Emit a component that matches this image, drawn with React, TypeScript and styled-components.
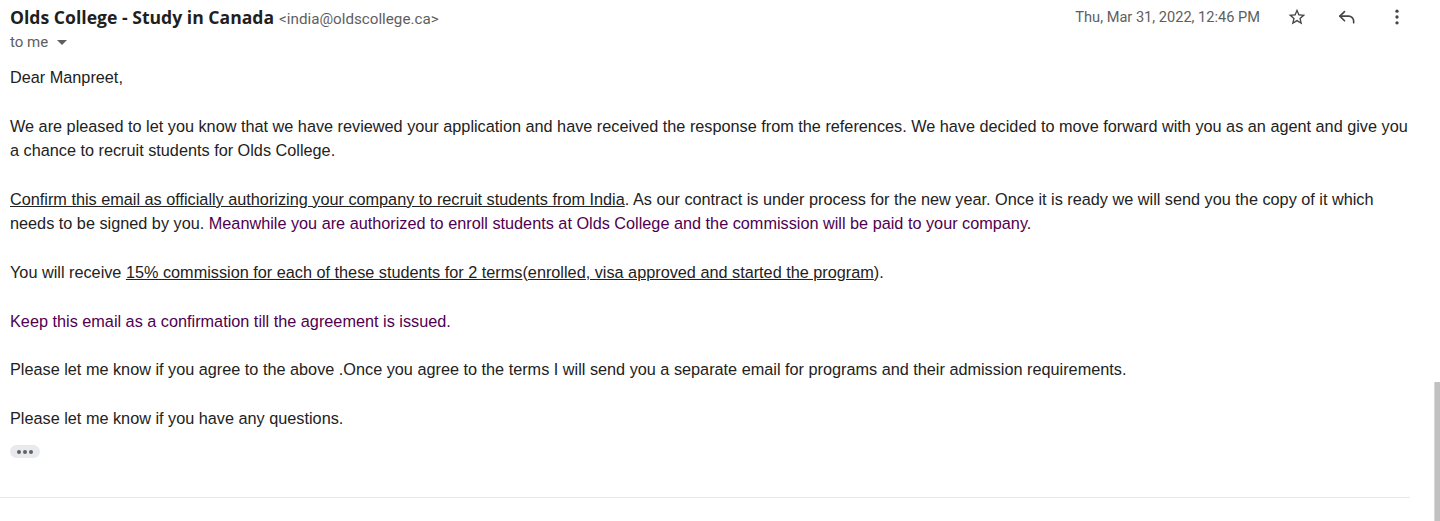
import styled, { createGlobalStyle } from 'styled-components';

const GlobalStyle = createGlobalStyle`
  html, body {
    margin: 0;
    padding: 0;
    background: #fff;
  }
  body {
    font-family: Arial, "Liberation Sans", sans-serif;
    overflow: hidden;
  }
`;

const StarIcon = () => (
  <svg width="20" height="20" viewBox="0 0 24 24" fill="#444746">
    <path d="M22 9.24l-7.19-.62L12 2 9.19 8.63 2 9.24l5.46 4.73L5.82 21 12 17.27 18.18 21l-1.63-7.03L22 9.24zM12 15.4l-3.76 2.27 1-4.28-3.32-2.88 4.38-.38L12 6.1l1.71 4.04 4.38.38-3.32 2.88 1 4.28L12 15.4z" />
  </svg>
);

const ReplyIcon = () => (
  <svg width="20" height="20" viewBox="0 0 24 24" fill="none" stroke="#444746" strokeWidth="2" strokeLinecap="round" strokeLinejoin="round">
    <path d="M9 5.5 3.5 11 9 16.5" />
    <path d="M3.5 11H14a6 6 0 0 1 6 6v2" />
  </svg>
);

const MoreIcon = () => (
  <svg width="20" height="20" viewBox="0 0 24 24" fill="#444746">
    <circle cx="12" cy="5" r="2" />
    <circle cx="12" cy="12" r="2" />
    <circle cx="12" cy="19" r="2" />
  </svg>
);

const App = () => {
  return (
    <>
      <GlobalStyle />
      <Message>
        <Header>
          <Sender>
            <SenderName>Olds College - Study in Canada</SenderName>
            <SenderEmail>&lt;india@oldscollege.ca&gt;</SenderEmail>
          </Sender>
          <Actions>
            <DateText>Thu, Mar 31, 2022, 12:46 PM</DateText>
            <IconButton aria-label="Star">
              <StarIcon />
            </IconButton>
            <IconButton aria-label="Reply">
              <ReplyIcon />
            </IconButton>
            <IconButton aria-label="More">
              <MoreIcon />
            </IconButton>
          </Actions>
        </Header>
        <Recipients>
          to me
          <Caret />
        </Recipients>

        <Body>
          <P>Dear Manpreet,</P>
          <P>
            We are pleased to let you know that we have reviewed your application and have received the response
            from the references. We have decided to move forward with you as an agent and give you a chance to
            recruit students for Olds College.
          </P>
          <P>
            <U>Confirm this email as officially authorizing your company to recruit students from India</U>. As our
            contract is under process for the new year. Once it is ready we will send you the copy of it which needs
            to be signed by you.{' '}
            <Quoted>
              Meanwhile you are authorized to enroll students at Olds College and the commission will be paid to
              your company.
            </Quoted>
          </P>
          <P>
            You will receive <U>15% commission for each of these students for 2 terms</U>(
            <U>enrolled, visa approved and started the program</U>).
          </P>
          <P>
            <Quoted>Keep this email as a confirmation till the agreement is issued.</Quoted>
          </P>
          <P>
            Please let me know if you agree to the above .Once you agree to the terms I will send you a separate
            email for programs and their admission requirements.
          </P>
          <P $last>Please let me know if you have any questions.</P>
          <Ellipsis aria-label="Show trimmed content">
            <Dot />
            <Dot />
            <Dot />
          </Ellipsis>
        </Body>
        <Divider />
      </Message>
      <ScrollThumb />
    </>
  );
};

const Message = styled.div`
  width: 1440px;
`;

const Header = styled.div`
  display: flex;
  align-items: center;
  justify-content: space-between;
  height: 34px;
  padding-left: 10px;
  padding-right: 23px;
`;

const Sender = styled.div`
  display: flex;
  align-items: baseline;
  gap: 5px;
`;

const SenderName = styled.span`
  font-family: "Open Sans", Roboto, sans-serif;
  font-weight: 700;
  font-size: 17.6px;
  color: #1f1f1f;
`;

const SenderEmail = styled.span`
  font-family: Roboto, "Noto Sans", sans-serif;
  font-size: 15.2px;
  color: #5e5e5e;
`;

const Actions = styled.div`
  display: flex;
  align-items: center;
  gap: 10px;
`;

const DateText = styled.span`
  font-family: Roboto, "Noto Sans", sans-serif;
  font-size: 14.6px;
  color: #5e5e5e;
  margin-right: 7px;
`;

const IconButton = styled.button`
  display: flex;
  align-items: center;
  justify-content: center;
  width: 40px;
  height: 34px;
  padding: 0;
  border: 0;
  background: transparent;
  cursor: pointer;
`;

const Recipients = styled.div`
  display: flex;
  align-items: center;
  height: 16px;
  padding-left: 10px;
  font-family: Roboto, "Noto Sans", sans-serif;
  font-size: 15px;
  color: #5e5e5e;
`;

const Caret = styled.span`
  width: 0;
  height: 0;
  margin-left: 9px;
  margin-top: 1px;
  border-left: 5px solid transparent;
  border-right: 5px solid transparent;
  border-top: 5px solid #5e5e5e;
`;

const Body = styled.div`
  width: 1404px;
  margin-top: 15px;
  padding-left: 10px;
  font-family: Arial, "Liberation Sans", sans-serif;
  font-size: 16.25px;
  line-height: 24.36px;
  color: #222;
`;

const P = styled.p<{ $last?: boolean }>`
  margin: 0 0 ${({ $last }) => ($last ? '15px' : '24.36px')};
`;

const U = styled.span`
  text-decoration: underline;
`;

const Quoted = styled.span`
  color: #500050;
`;

const Ellipsis = styled.button`
  display: flex;
  align-items: center;
  justify-content: center;
  gap: 2px;
  width: 30px;
  height: 13px;
  padding: 0;
  border: 0;
  border-radius: 7px;
  background: #e8eaed;
  cursor: pointer;
`;

const Dot = styled.span`
  width: 4px;
  height: 4px;
  border-radius: 50%;
  background: #5f6368;
`;

const Divider = styled.div`
  width: 1410px;
  height: 1px;
  margin-top: 39px;
  background: #e8e8e8;
`;

const ScrollThumb = styled.div`
  position: fixed;
  right: 0;
  top: 382px;
  bottom: 0;
  width: 5px;
  background: #c1c1c1;
  border-left: 1px solid #d6d6d6;
`;

export default App;
